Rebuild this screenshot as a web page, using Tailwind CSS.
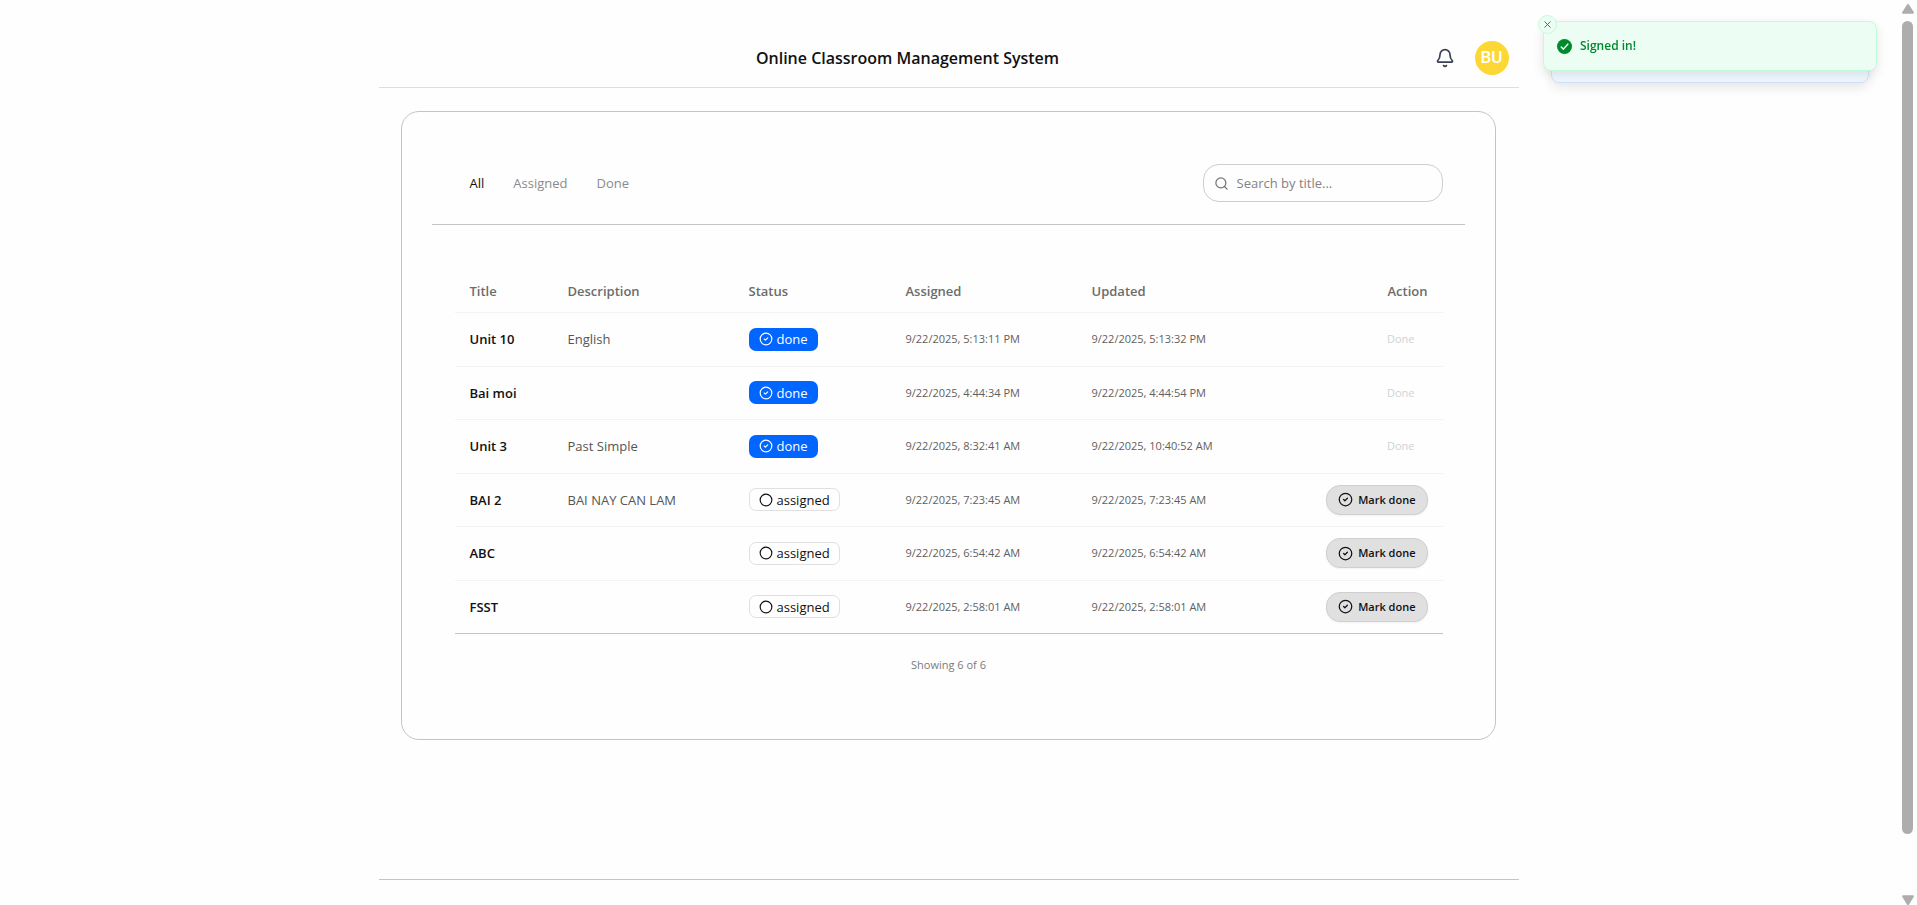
<!DOCTYPE html>
<html lang="en">
<head>
<meta charset="utf-8">
<title>Online Classroom Management System</title>
<script src="https://cdn.jsdelivr.net/npm/@tailwindcss/browser@4"></script>
</head>
<body class="bg-[#fefefe] text-[#111111] font-['Open_Sans','Noto_Sans',sans-serif] text-[12px] leading-4 overflow-hidden">
<svg class="hidden" aria-hidden="true">
  <symbol id="check" viewBox="0 0 24 24" fill="none" stroke="currentColor" stroke-width="2" stroke-linecap="round" stroke-linejoin="round"><circle cx="12" cy="12" r="10"/><path d="m9 12 2 2 4-4"/></symbol>
  <symbol id="ring" viewBox="0 0 24 24" fill="none" stroke="currentColor" stroke-width="2"><circle cx="12" cy="12" r="10"/></symbol>
</svg>

<div class="flex h-screen">
  <div class="flex-1 min-w-0">
    <div class="mx-auto w-full max-w-[1140px] h-full flex flex-col">
      <header class="flex items-center h-[88px] pt-7 px-[10px] pb-0 border-b border-[#dedede] shrink-0">
        <h1 class="flex-1 text-center text-[16px] leading-6 font-semibold">Online Classroom Management System</h1>
        <button class="size-9 mr-3 flex items-center justify-center text-[#364153]" aria-label="Notifications">
          <svg class="size-5" viewBox="0 0 24 24" fill="none" stroke="currentColor" stroke-width="2" stroke-linecap="round" stroke-linejoin="round"><path d="M10.268 21a2 2 0 0 0 3.464 0"/><path d="M3.262 15.326A1 1 0 0 0 4 17h16a1 1 0 0 0 .74-1.673C19.41 13.956 18 12.499 18 8A6 6 0 0 0 6 8c0 4.499-1.411 5.956-2.738 7.326"/></svg>
        </button>
        <button class="size-[34px] rounded-full bg-[#fdd835] text-white text-[17px] leading-none font-medium font-['Roboto',sans-serif]">BU</button>
      </header>

      <main class="ml-[22px] mr-[23px] mt-[23px] border border-[#c4c4c4] rounded-[18px] px-[30px] pt-[52px] pb-[66px]">
        <div class="flex items-center justify-between pl-[38px] pr-[22px] pb-[22px] border-b border-[#c4c4c4]">
          <nav class="flex gap-[29px] text-[13px] text-[#8b8b8b]" aria-label="Filter">
            <button class="text-[#111111]">All</button>
            <button>Assigned</button>
            <button>Done</button>
          </nav>
          <label class="flex items-center gap-2 w-60 h-[38px] px-[10px] rounded-2xl border border-[#cecece] text-[#737373]">
            <svg class="size-[15px] shrink-0" viewBox="0 0 24 24" fill="none" stroke="currentColor" stroke-width="2" stroke-linecap="round"><circle cx="11" cy="11" r="8"/><path d="m21 21-4.300-4.300"/></svg>
            <input type="text" aria-label="Search by title" placeholder="Search by title..." class="w-full min-w-0 bg-transparent outline-none text-[13px] text-black placeholder:text-[#838383]">
          </label>
        </div>

        <div class="pl-[23px] pr-[22px] pt-[45px]">
          <table class="w-full table-fixed border-collapse text-left">
            <colgroup><col class="w-[98px]"><col class="w-[181px]"><col class="w-[157px]"><col class="w-[186px]"><col class="w-[186px]"><col></colgroup>
            <thead class="text-[13px] text-[#6c6c6c]">
              <tr class="h-[42px] border-b border-[#f3f3f3]">
                <th class="px-[15px] font-semibold">Title</th><th class="px-[15px] font-semibold">Description</th><th class="px-[15px] font-semibold">Status</th><th class="px-[15px] font-semibold">Assigned</th><th class="px-[15px] font-semibold">Updated</th><th class="px-[15px] font-semibold text-right">Action</th>
              </tr>
            </thead>
            <tbody id="rows"></tbody>
          </table>
          <p class="mt-[23px] text-center text-[11px] text-[#7b7b7b]">Showing 6 of 6</p>
        </div>
      </main>

      <footer class="mt-[139px] border-t border-[#c4c4c4]"></footer>
    </div>
  </div>

  <!-- Page scrollbar -->
  <div class="w-5 shrink-0 flex flex-col items-center pt-1 pl-px text-[#adadad]" aria-hidden="true">
    <svg class="w-3 h-[10px] shrink-0" viewBox="0 0 12 10" fill="currentColor"><path d="M6 0q.6 0 1 .6L11.700 8q.6 1.600-.9 1.700H1.200Q-.3 9.600.3 8L5 .6Q5.400 0 6 0Z"/></svg>
    <div class="mt-[7px] w-[11px] h-[813px] rounded-full bg-[#adadad]"></div>
    <svg class="mt-auto w-3 h-[10px] shrink-0" viewBox="0 0 12 10" fill="currentColor"><path d="M6 10q-.6 0-1-.6L.3 2Q-.3.4 1.200.3h9.600q1.500.1.9 1.700L7 9.400q-.4.6-1 .6Z"/></svg>
  </div>
</div>

<!-- Toasts -->
<div class="fixed top-[21px] right-10 w-[334px]" role="status">
  <div class="absolute inset-x-2 top-3 h-[50px] rounded-lg border border-[#d3e0fd] bg-[#f0f8ff] shadow-[0_4px_12px_rgba(0,0,0,0.1)]"></div>
  <div class="relative flex items-center gap-2 h-[50px] px-[13px] rounded-lg border border-[#bffcd9] bg-[#ecfdf3] text-[#008a2e] shadow-[0_4px_12px_rgba(0,0,0,0.1)]">
    <svg class="size-[15px]" viewBox="0 0 16 16"><circle cx="8" cy="8" r="8" fill="currentColor"/><path d="m4.500 8.500 2.300 2.300 4.700-5.300" fill="none" stroke="#ecfdf3" stroke-width="1.600" stroke-linecap="round" stroke-linejoin="round"/></svg>
    <span class="font-semibold">Signed in!</span>
    <button class="absolute -left-[6px] -top-[7px] size-[19px] rounded-full border border-[#bffcd9] bg-[#ecfdf3] flex items-center justify-center" aria-label="Close toast">
      <svg class="size-[11px]" viewBox="0 0 24 24" fill="none" stroke="currentColor" stroke-width="2" stroke-linecap="round"><path d="M18 6 6 18M6 6l12 12"/></svg>
    </button>
  </div>
</div>

<script>
const rows = [
  ["Unit 10", "English", true, "9/22/2025, 5:13:11 PM", "9/22/2025, 5:13:32 PM"],
  ["Bai moi", "", true, "9/22/2025, 4:44:34 PM", "9/22/2025, 4:44:54 PM"],
  ["Unit 3", "Past Simple", true, "9/22/2025, 8:32:41 AM", "9/22/2025, 10:40:52 AM"],
  ["BAI 2", "BAI NAY CAN LAM", false, "9/22/2025, 7:23:45 AM", "9/22/2025, 7:23:45 AM"],
  ["ABC", "", false, "9/22/2025, 6:54:42 AM", "9/22/2025, 6:54:42 AM"],
  ["FSST", "", false, "9/22/2025, 2:58:01 AM", "9/22/2025, 2:58:01 AM"],
];
const badge = done => done
  ? `<span class="inline-flex items-center gap-1 h-[23px] px-[10px] rounded-[7px] bg-[#0066ff] text-white text-[13px] align-middle"><svg class="size-[14px]"><use href="#check"/></svg>done</span>`
  : `<span class="inline-flex items-center gap-1 h-[23px] px-[9px] rounded-[7px] border border-[#e0e0e0] text-[13px] align-middle"><svg class="size-[14px]"><use href="#ring"/></svg>assigned</span>`;
const action = done => done
  ? `<button disabled class="px-[13px] text-[11px] text-[#d2d2d2] align-middle">Done</button>`
  : `<button class="inline-flex items-center gap-[5px] h-[30px] px-[11px] rounded-[14px] border border-[#cfcfcf] bg-[#e0e0e0] text-[11px] font-semibold shadow-xs align-middle"><svg class="size-[15px]"><use href="#check"/></svg>Mark done</button>`;
document.getElementById("rows").innerHTML = rows.map(([t, d, done, a, u], i) => `
  <tr class="${i % 2 ? "h-[53px]" : "h-[54px]"} border-b ${i === 5 ? "border-[#c4c4c4]" : "border-[#f3f3f3]"}">
    <td class="px-[15px] text-[13px] font-semibold">${t}</td>
    <td class="px-[15px] text-[13px] text-[#555555]">${d}</td>
    <td class="px-[15px]">${badge(done)}</td>
    <td class="px-[15px] text-[11px] text-[#5f5f5f]">${a}</td>
    <td class="px-[15px] text-[11px] text-[#5f5f5f]">${u}</td>
    <td class="px-[15px] text-right">${action(done)}</td>
  </tr>`).join("");
</script>
</body>
</html>
